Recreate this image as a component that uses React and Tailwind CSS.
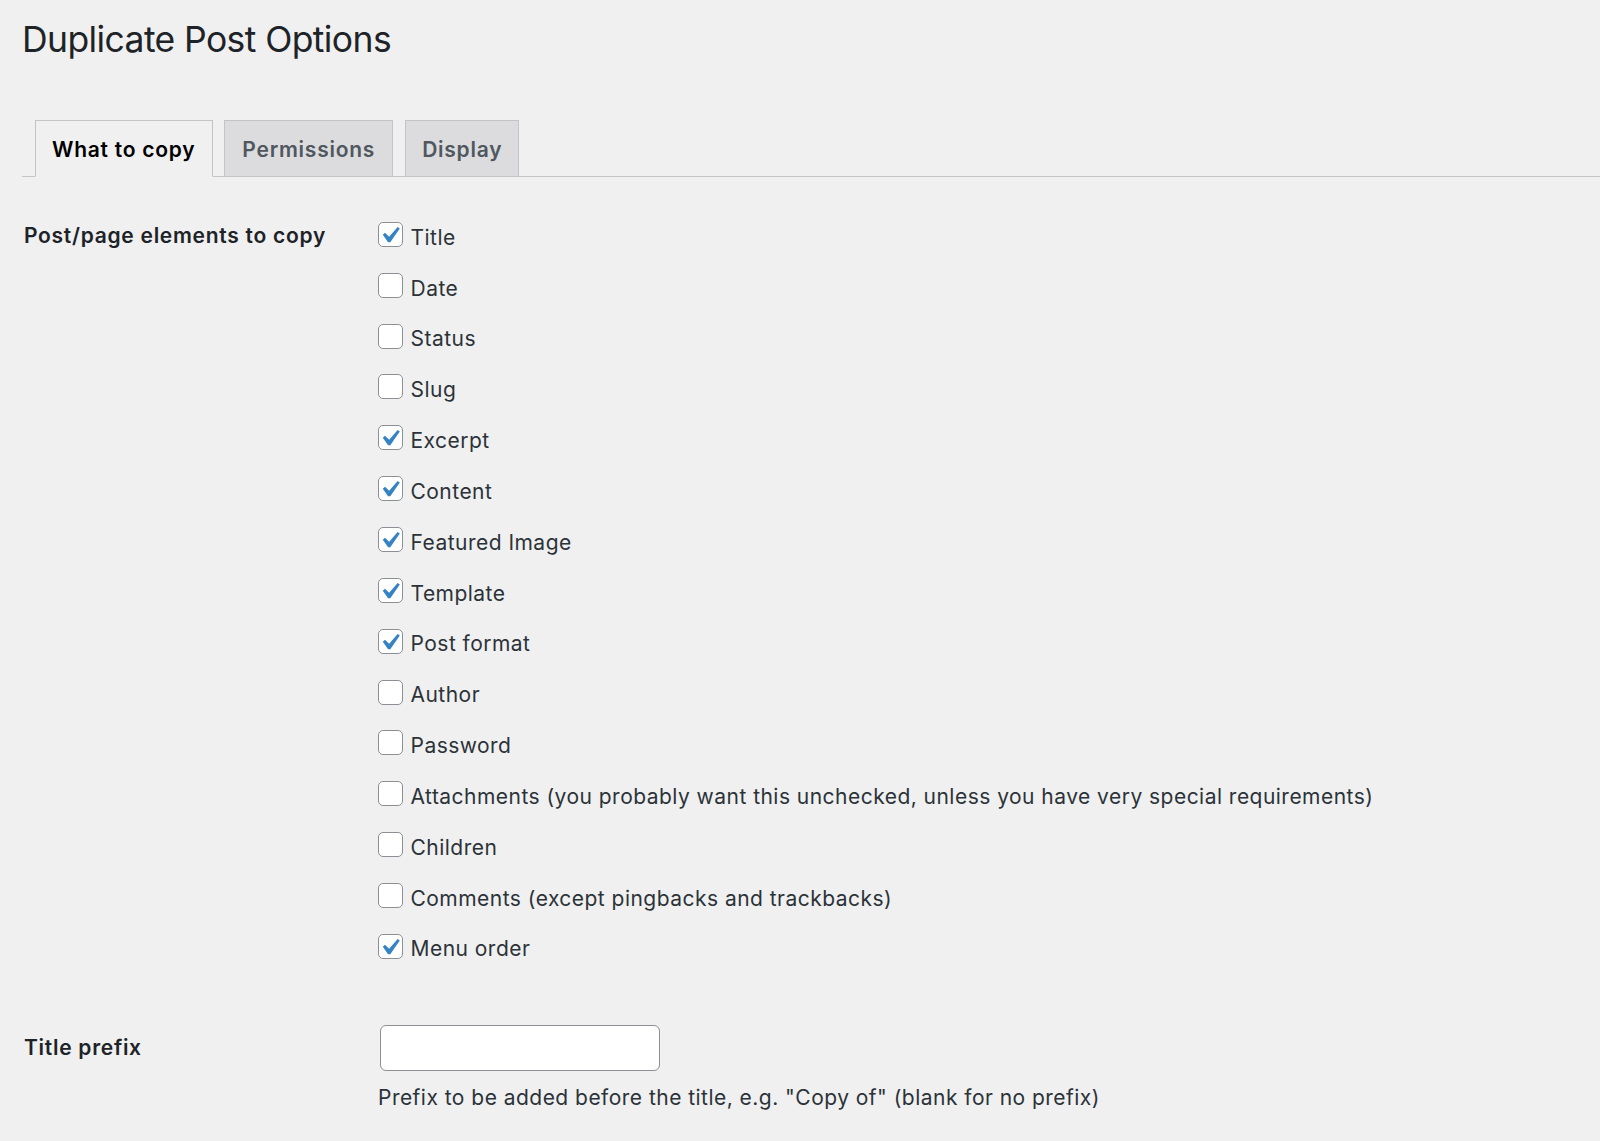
import React from "react";

const options = [
  ["Title", true],
  ["Date", false],
  ["Status", false],
  ["Slug", false],
  ["Excerpt", true],
  ["Content", true],
  ["Featured Image", true],
  ["Template", true],
  ["Post format", true],
  ["Author", false],
  ["Password", false],
  ["Attachments (you probably want this unchecked, unless you have very special requirements)", false],
  ["Children", false],
  ["Comments (except pingbacks and trackbacks)", false],
  ["Menu order", true],
];

function Checkbox({ checked }) {
  return (
    <span className="relative block w-[25px] h-[25px] shrink-0 rounded-[5px] border border-[#8c8f94] bg-white">
      {checked && (
        <svg
          className="absolute -left-px -top-px"
          width="25"
          height="25"
          viewBox="0 0 25 25"
        >
          <path
            d="M19.62 4.92L21.82 6.46L12.29 20.2H10.09L4.78 12.76L6.98 10.71L11.19 14.64Z"
            fill="#3582c4"
          />
        </svg>
      )}
    </span>
  );
}

export default function App() {
  return (
    <div
      className="min-h-[1141px] bg-[#f0f0f1] pl-[22px] text-[#1d2327]"
      style={{ fontFamily: "Inter, 'Noto Sans', sans-serif" }}
    >
      <h1 className="pt-[16px] text-[35.5px] leading-[47px] font-normal text-[#1d2327] -tracking-[0.6px]">
        Duplicate Post Options
      </h1>

      <div className="mt-[57px] flex border-b border-[#c3c4c7] pl-[12.7px]">
        <div className="-mb-px flex h-[57px] w-[178px] justify-center border border-[#c3c4c7] border-b-[#f0f0f1] bg-[#f0f0f1] pt-[12.5px] text-[21px] font-semibold tracking-[0.75px] text-black">
          What to copy
        </div>
        <div className="-mb-px ml-[11.8px] flex h-[57px] w-[168.5px] justify-center border border-[#c3c4c7] bg-[#dcdcde] pt-[12.5px] text-[21px] font-semibold tracking-[0.75px] text-[#50575e]">
          Permissions
        </div>
        <div className="-mb-px ml-[12px] flex h-[57px] w-[114.5px] justify-center border border-[#c3c4c7] bg-[#dcdcde] pt-[12.5px] text-[21px] font-semibold tracking-[0.75px] text-[#50575e]">
          Display
        </div>
      </div>

      <div className="mt-[32px] flex">
        <div className="w-[356px] shrink-0 pl-[2px]">
          <div className="flex h-[50.86px] items-center pt-[2.6px] text-[21px] font-semibold tracking-[0.72px] text-[#1d2327]">
            Post/page elements to copy
          </div>
        </div>
        <div className="flex flex-col">
          {options.map(([label, checked]) => (
            <label key={label} className="flex h-[50.857px] items-center">
              <Checkbox checked={checked} />
              <span className="ml-[7.5px] mt-[6px] text-[21px] tracking-[0.47px] text-[#2c3338]">{label}</span>
            </label>
          ))}
        </div>
      </div>

      <div className="mt-[53px] flex">
        <div className="w-[356px] shrink-0 pl-[2px]">
          <div className="flex h-[46px] items-center text-[21px] font-semibold tracking-[0.72px] text-[#1d2327]">
            Title prefix
          </div>
        </div>
        <div className="flex flex-col">
          <input
            type="text"
            className="ml-[2px] h-[46px] w-[280px] rounded-[6px] border border-[#8c8f94] bg-white px-3 text-[21px] outline-none"
          />
          <p className="mt-[11.8px] text-[21px] tracking-[0.47px] text-[#2c3338]">
            Prefix to be added before the title, e.g. "Copy of" (blank for no prefix)
          </p>
        </div>
      </div>
    </div>
  );
}
